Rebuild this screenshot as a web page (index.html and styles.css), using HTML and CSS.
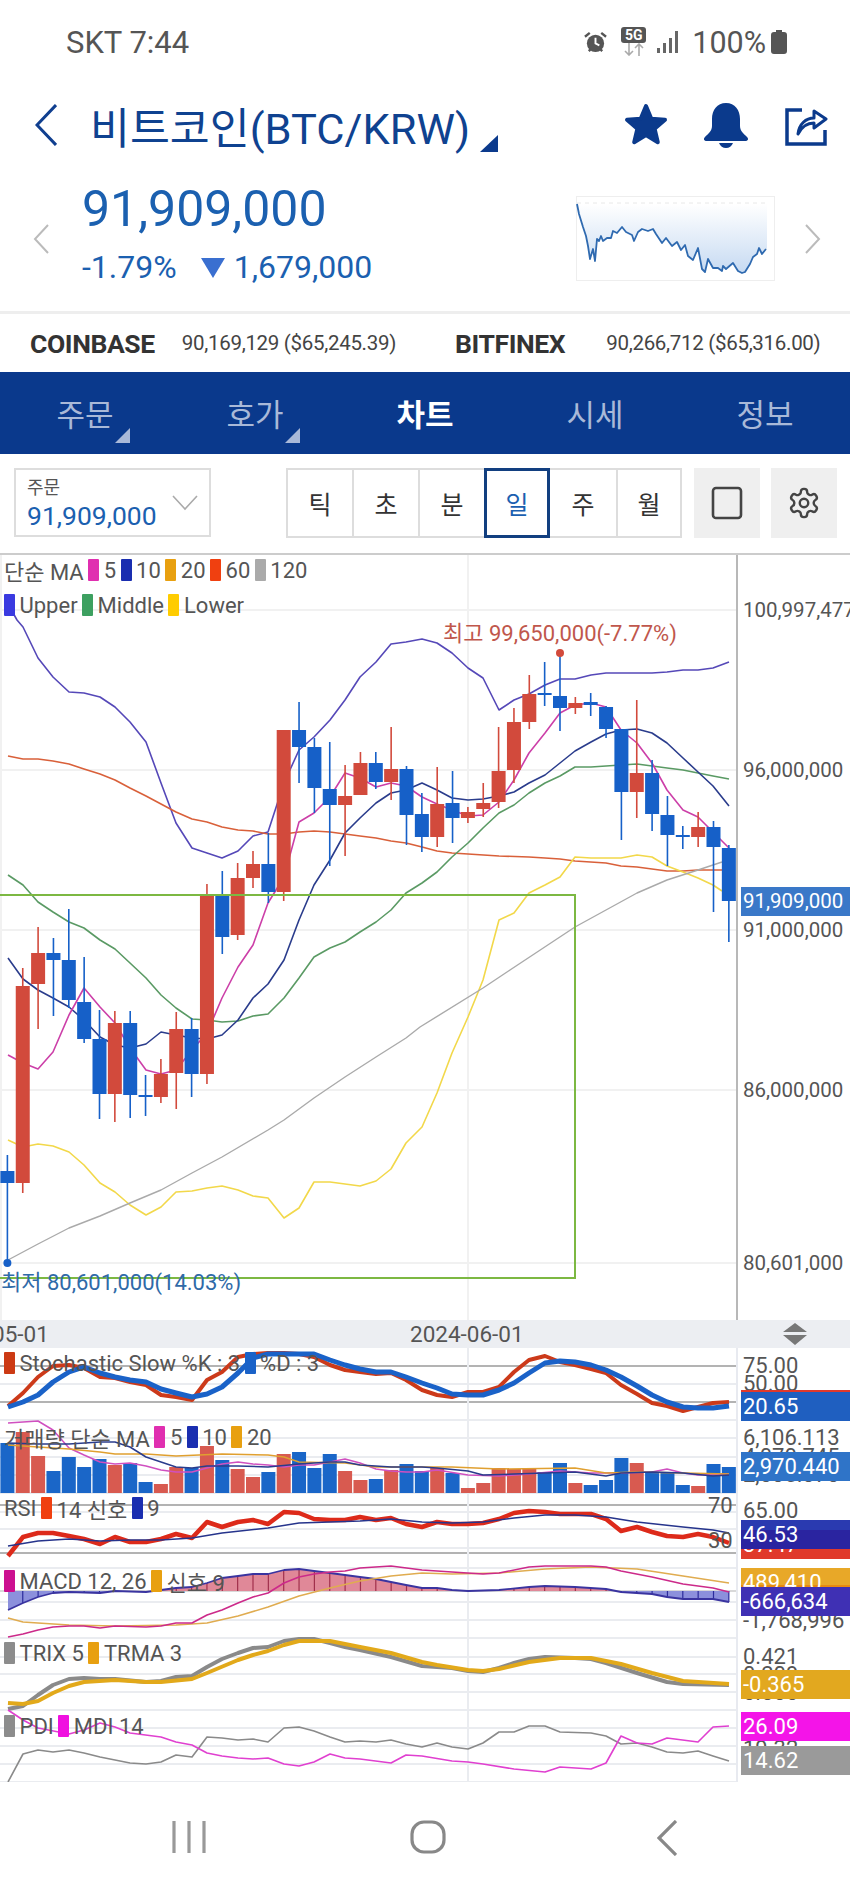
FILE: index.html
```html
<!DOCTYPE html>
<html lang="ko">
<head>
    <meta charset="UTF-8">
    <meta name="viewport" content="width=device-width, initial-scale=1.0">
    <title>비트코인(BTC/KRW) 차트</title>
    <link rel="stylesheet" href="styles.css">
</head>
<body>
    <div id="page">
        <!-- Status bar -->
        <div class="status">
            <span class="status-time">SKT 7:44</span>
            <div class="status-icons">
                <svg class="ico-alarm" width="23" height="23" viewBox="0 0 24 24">
                    <circle cx="12" cy="13" r="9" fill="#555"/>
                    <path d="M1 6l5-4M23 6l-5-4" stroke="#555" stroke-width="2.5" fill="none"/>
                    <path d="M12 7v6l4 2" stroke="#fff" stroke-width="2" fill="none"/>
                    <path d="M5 21l2-2M19 21l-2-2" stroke="#555" stroke-width="2.5"/>
                </svg>
                <div class="ico-5g">
                    <span class="five-g">5G</span>
                    <svg width="22" height="13" viewBox="0 0 22 13">
                        <path d="M6 0v12M2 8l4 4 4-4" stroke="#aaa" stroke-width="1.6" fill="none"/>
                        <path d="M16 13V1M12 5l4-4 4 4" stroke="#aaa" stroke-width="1.6" fill="none"/>
                    </svg>
                </div>
                <svg class="ico-signal" width="22" height="22" viewBox="0 0 22 22">
                    <path d="M1 22v-5h3v5zM7 22V12h3v10zM13 22V7h3v15zM19 22V0h3v22z" fill="#666"/>
                </svg>
                <span class="status-batt">100%</span>
                <svg class="ico-battery" width="16" height="24" viewBox="0 0 16 24">
                    <path d="M5 0h6v2h2a3 3 0 0 1 3 3v16a3 3 0 0 1-3 3H3a3 3 0 0 1-3-3V5a3 3 0 0 1 3-3h2z" fill="#555"/>
                </svg>
            </div>
        </div>

        <!-- Title bar -->
        <div class="title-bar">
            <svg class="back" width="22" height="42" viewBox="0 0 22 42">
                <polyline points="21,1 2,21 21,41" fill="none" stroke="#103f8f" stroke-width="3"/>
            </svg>
            <h1 class="coin-name">비트코인(BTC/KRW)</h1>
            <span class="corner"></span>
            <div class="title-icons">
                <svg width="48" height="48" viewBox="0 0 48 48">
                    <polygon points="24,5 29.3,17.7 43,18.8 32.6,27.8 35.8,41.2 24,34 12.2,41.2 15.4,27.8 5,18.8 18.7,17.7" fill="#0b3a8c" stroke="#0b3a8c" stroke-width="4" stroke-linejoin="round"/>
                </svg>
                <svg class="bell" width="46" height="46" viewBox="0 0 46 46">
                    <path d="M23 1C32 1 37 8 37 17V24C37 29 41 32 44 35C46 37 45 39 42 39H4C1 39 0 37 2 35C5 32 9 29 9 24V17C9 8 14 1 23 1ZM16 41H30C29 44 26 46 23 46C20 46 17 44 16 41Z" fill="#0b3a8c"/>
                </svg>
                <svg class="share" width="44" height="42" viewBox="0 0 44 42">
                    <path d="M18 6H3V40H41V26" fill="none" stroke="#0b3a8c" stroke-width="3.5"/>
                    <path d="M14 30C15 20 22 14 30 14V7L42 15L30 24V19C24 19 18 22 14 30Z" fill="none" stroke="#0b3a8c" stroke-width="3" stroke-linejoin="round"/>
                </svg>
            </div>
        </div>

        <!-- Current price and mini chart -->
        <div class="quote">
            <svg class="arrow-left" width="16" height="30" viewBox="0 0 16 30">
                <polyline points="15,1 2,15 15,29" fill="none" stroke="#bbb" stroke-width="2"/>
            </svg>
            <div class="price-block">
                <div class="price">91,909,000</div>
                <div class="change">
                    <span class="change-pct">-1.79%</span>
                    <span class="tri-down"></span>
                    <span class="change-amt">1,679,000</span>
                </div>
            </div>
            <div class="spark-box">
                <svg width="199" height="85" viewBox="576 197 199 85">
                    <defs>
                        <linearGradient id="sparkFill" x1="0" y1="0" x2="0" y2="1">
                            <stop offset="0" stop-color="#fff"/>
                            <stop offset="1" stop-color="#c6daf2"/>
                        </linearGradient>
                    </defs>
                    <polygon fill="url(#sparkFill)" points="577,205 579,215 583,228 586,237 588,247 590,260 593,250 595,262 597,240 599,242 601,237 603,242 607,239 611,239 613,232 617,234 622,228 626,233 632,236 634,242 638,233 642,230 648,232 653,230 656,235 662,244 666,239 672,247 677,243 681,251 685,246 688,257 693,261 698,249 702,270 705,273 708,260 713,269 718,269 722,272 723,267 726,270 733,264 738,272 742,274 745,273 750,265 753,258 757,255 759,249 762,255 766,250 767,250 767,205"/>
                    <line x1="577" y1="204" x2="767" y2="204" stroke="#e8e8e8" stroke-dasharray="4 4"/>
                    <polyline fill="none" stroke="#2f6ab0" stroke-width="1.8" stroke-linejoin="round" points="577,205 579,215 583,228 586,237 588,247 590,260 593,250 595,262 597,240 599,242 601,237 603,242 607,239 611,239 613,232 617,234 622,228 626,233 632,236 634,242 638,233 642,230 648,232 653,230 656,235 662,244 666,239 672,247 677,243 681,251 685,246 688,257 693,261 698,249 702,270 705,273 708,260 713,269 718,269 722,272 723,267 726,270 733,264 738,272 742,274 745,273 750,265 753,258 757,255 759,249 762,255 766,250"/>
                </svg>
            </div>
            <svg class="arrow-right" width="16" height="30" viewBox="0 0 16 30">
                <polyline points="1,1 14,15 1,29" fill="none" stroke="#bbb" stroke-width="2"/>
            </svg>
        </div>

        <!-- Overseas exchange prices -->
        <div class="exchange">
            <b class="ex-name ex-coinbase">COINBASE</b>
            <span class="ex-price">90,169,129 ($65,245.39)</span>
            <b class="ex-name ex-bitfinex">BITFINEX</b>
            <span class="ex-price">90,266,712 ($65,316.00)</span>
        </div>

        <!-- Main tabs -->
        <div class="nav">
            <div class="nav-item has-menu">주문</div>
            <div class="nav-item has-menu">호가</div>
            <div class="nav-item active">차트</div>
            <div class="nav-item">시세</div>
            <div class="nav-item">정보</div>
        </div>

        <!-- Chart toolbar -->
        <div class="toolbar">
            <div class="selector">
                <div class="selector-text">
                    <span class="selector-label">주문</span>
                    <span class="selector-price">91,909,000</span>
                </div>
                <svg class="selector-arrow" width="26" height="16" viewBox="0 0 26 16">
                    <polyline points="1,1 13,14 25,1" fill="none" stroke="#aaa" stroke-width="1.6"/>
                </svg>
            </div>
            <div class="periods">
                <div class="period">틱</div>
                <div class="period">초</div>
                <div class="period">분</div>
                <div class="period selected">일</div>
                <div class="period">주</div>
                <div class="period">월</div>
            </div>
            <div class="tool-btn first">
                <svg width="32" height="34" viewBox="0 0 32 34">
                    <rect x="2" y="2" width="28" height="30" rx="3" fill="none" stroke="#444" stroke-width="2.6"/>
                </svg>
            </div>
            <div class="tool-btn">
                <svg width="34" height="34" viewBox="0 0 24 24" fill="none" stroke="#444" stroke-width="1.7">
                    <path d="M12.22 2h-.44a2 2 0 0 0-2 2v.18a2 2 0 0 1-1 1.73l-.43.25a2 2 0 0 1-2 0l-.15-.08a2 2 0 0 0-2.73.73l-.22.38a2 2 0 0 0 .73 2.73l.15.1a2 2 0 0 1 1 1.72v.51a2 2 0 0 1-1 1.74l-.15.09a2 2 0 0 0-.73 2.73l.22.38a2 2 0 0 0 2.73.73l.15-.08a2 2 0 0 1 2 0l.43.25a2 2 0 0 1 1 1.73V20a2 2 0 0 0 2 2h.44a2 2 0 0 0 2-2v-.18a2 2 0 0 1 1-1.73l.43-.25a2 2 0 0 1 2 0l.15.08a2 2 0 0 0 2.73-.73l.22-.39a2 2 0 0 0-.73-2.73l-.15-.08a2 2 0 0 1-1-1.74v-.5a2 2 0 0 1 1-1.74l.15-.09a2 2 0 0 0 .73-2.73l-.22-.38a2 2 0 0 0-2.73-.73l-.15.08a2 2 0 0 1-2 0l-.43-.25a2 2 0 0 1-1-1.73V4a2 2 0 0 0-2-2z"/>
                    <circle cx="12" cy="12" r="3"/>
                </svg>
            </div>
        </div>

        <!-- Chart: svg drawn by chart.js, legends and labels on top of it -->
        <div class="chart" id="chart">
            <svg id="plot" width="850" height="1229" viewBox="0 553 850 1229"></svg>

            <div class="panel panel-price">
                <div class="legend">
                    <span>단순 MA</span>
                    <i class="sw c-mag"></i><span>5</span>
                    <i class="sw c-navy"></i><span>10</span>
                    <i class="sw c-orange"></i><span>20</span>
                    <i class="sw c-red"></i><span>60</span>
                    <i class="sw c-grey"></i><span>120</span>
                </div>
                <div class="legend legend-second">
                    <i class="sw c-violet"></i><span>Upper</span>
                    <i class="sw c-green"></i><span>Middle</span>
                    <i class="sw c-yellow"></i><span>Lower</span>
                </div>
                <span class="note note-high">최고 99,650,000(-7.77%)</span>
                <span class="note note-low">최저 80,601,000(14.03%)</span>
            </div>

            <div class="date-strip">
                <span class="date-left">05-01</span>
                <span class="date-mid">2024-06-01</span>
                <svg class="splitter" width="26" height="22" viewBox="0 0 26 22">
                    <path d="M13 0L25 9H1zM1 12H25L13 22z" fill="#777"/>
                </svg>
            </div>

            <div class="panel panel-stoch">
                <div class="legend">
                    <i class="sw c-red-dk"></i><span>Stochastic Slow %K : 3</span>
                    <i class="sw c-blue"></i><span>%D : 3</span>
                </div>
            </div>
            <div class="panel panel-vol">
                <div class="legend">
                    <span>거래량 단순 MA</span>
                    <i class="sw c-mag"></i><span>5</span>
                    <i class="sw c-navy"></i><span>10</span>
                    <i class="sw c-orange"></i><span>20</span>
                </div>
            </div>
            <div class="panel panel-rsi">
                <div class="legend">
                    <span>RSI</span>
                    <i class="sw c-red"></i><span>14 신호</span>
                    <i class="sw c-navy"></i><span>9</span>
                </div>
            </div>
            <div class="panel panel-macd">
                <div class="legend">
                    <i class="sw c-mag-dk"></i><span>MACD 12, 26</span>
                    <i class="sw c-orange"></i><span>신호 9</span>
                </div>
            </div>
            <div class="panel panel-trix">
                <div class="legend">
                    <i class="sw c-grey-dk"></i><span>TRIX 5</span>
                    <i class="sw c-orange"></i><span>TRMA 3</span>
                </div>
            </div>
            <div class="panel panel-dmi">
                <div class="legend">
                    <i class="sw c-grey-dk"></i><span>PDI</span>
                    <i class="sw c-pink"></i><span>MDI 14</span>
                </div>
            </div>

            <!-- Axis values, data-y is the page y of the label centre -->
            <span class="tick tick-main" data-y="610">100,997,477</span>
            <span class="tick tick-main" data-y="770">96,000,000</span>
            <span class="tick tick-main" data-y="930">91,000,000</span>
            <span class="tick tick-main" data-y="1090">86,000,000</span>
            <span class="tick tick-main" data-y="1263">80,601,000</span>
            <span class="tag t-price" data-y="901">91,909,000</span>

            <span class="tick" data-y="1366">75.00</span>
            <span class="tick" data-y="1384">50.00</span>
            <span class="tag t-red" data-y="1404">25.47</span>
            <span class="tag t-blue" data-y="1406">20.65</span>

            <span class="tick" data-y="1438">6,106.113</span>
            <span class="tick" data-y="1457">4,070.745</span>
            <span class="tick" data-y="1475">2,035.373</span>
            <span class="tag t-vol" data-y="1466">2,970.440</span>

            <span class="tick tick-inner" data-y="1506">70</span>
            <span class="tick tick-inner" data-y="1541">30</span>
            <span class="tick" data-y="1511">65.00</span>
            <span class="tag t-red" data-y="1544">37.47</span>
            <span class="tag t-navy" data-y="1534">46.53</span>

            <span class="tag t-orange" data-y="1582">489,410</span>
            <span class="tick" data-y="1621">-1,768,996</span>
            <span class="tag t-purple" data-y="1601">-666,634</span>

            <span class="tick" data-y="1657">0.421</span>
            <span class="tick" data-y="1675">0.209</span>
            <span class="tick" data-y="1693">0.000</span>
            <span class="tag t-gold" data-y="1684">-0.365</span>

            <span class="tick" data-y="1749">19.32</span>
            <span class="tag t-pink" data-y="1726">26.09</span>
            <span class="tag t-grey" data-y="1760">14.62</span>
        </div>

        <!-- Android soft keys -->
        <div class="softkeys">
            <svg class="key-recent" width="34" height="34" viewBox="0 0 34 34">
                <path d="M2 1V33M17 1V33M32 1V33" stroke="#999" stroke-width="3.2" fill="none"/>
            </svg>
            <svg class="key-home" width="36" height="34" viewBox="0 0 36 34">
                <rect x="2" y="2" width="32" height="30" rx="12" fill="none" stroke="#888" stroke-width="3.2"/>
            </svg>
            <svg class="key-back" width="20" height="36" viewBox="0 0 20 36">
                <polyline points="19,1 2,18 19,35" fill="none" stroke="#888" stroke-width="3.2"/>
            </svg>
        </div>
    </div>

    <script src="chart.js"></script>
</body>
</html>
```

FILE: styles.css
```css
* {
    box-sizing: border-box;
}

body {
    margin: 0;
    background-color: #fff;
    font-family: Roboto, "Noto Sans CJK KR", sans-serif;
    color: #555;
}

#page {
    width: 850px;
    height: 1889px;
    display: flex;
    flex-direction: column;
    overflow: hidden;
}

/* Status bar */
.status {
    height: 84px;
    display: flex;
    align-items: center;
    justify-content: space-between;
    padding: 0 63px 0 66px;
    color: #555;
}

.status-time {
    font-size: 31px;
}

.status-icons {
    display: flex;
    align-items: center;
}

.ico-5g {
    display: flex;
    flex-direction: column;
    align-items: center;
    margin: -2px 10px 0 14px;
}

.five-g {
    width: 25px;
    height: 16px;
    background-color: #555;
    border-radius: 3px;
    color: #fff;
    font-size: 14px;
    font-weight: bold;
    line-height: 16px;
    text-align: center;
}

.status-batt {
    margin: 0 5px 0 14px;
    font-size: 30.5px;
}

/* Title bar */
.title-bar {
    height: 82px;
    display: flex;
    align-items: center;
    padding-left: 35px;
}

.coin-name {
    margin: 0 0 0 33px;
    font-size: 43.4px;
    font-weight: normal;
    color: #0f4290;
    white-space: nowrap;
}

.corner {
    width: 0;
    height: 0;
    align-self: flex-end;
    margin: 0 0 14px 10px;
    border-bottom: 17px solid #0b3a8c;
    border-left: 18px solid transparent;
}

.title-icons {
    display: flex;
    align-items: center;
    margin-left: auto;
    margin-right: 22px;
}

.bell {
    margin-left: 33px;
}

.share {
    margin-left: 35px;
}

/* Price + sparkline */
.quote {
    height: 145px;
    display: flex;
    align-items: center;
    padding: 0 29px 0 33px;
}

.price-block {
    margin: 0 0 11px 33px;
    color: #1b60b0;
}

.price {
    height: 60px;
    font-size: 50px;
    line-height: 60px;
}

.change {
    display: flex;
    align-items: center;
    height: 40px;
    margin-top: 8px;
    font-size: 32px;
}

.tri-down {
    width: 0;
    height: 0;
    margin: 2px 9px 0 24px;
    border-top: 20px solid #3a6fd0;
    border-left: 12.5px solid transparent;
    border-right: 12.5px solid transparent;
}

.spark-box {
    width: 199px;
    height: 85px;
    margin-left: auto;
    border: 1px solid #eee;
}

.spark-box svg {
    display: block;
    margin: -1px;
}

.arrow-right {
    margin-left: 30px;
}

/* Exchange prices */
.exchange {
    height: 61px;
    display: flex;
    align-items: center;
    padding-left: 30px;
    border-top: 3px solid #eee;
    font-size: 20.5px;
    color: #444;
    letter-spacing: -0.3px;
}

.ex-name {
    font-size: 26.5px;
    color: #333;
    letter-spacing: -0.4px;
}

.ex-coinbase {
    margin-right: 27px;
}

.ex-bitfinex {
    margin: 0 41px 0 59px;
}

/* Main tabs */
.nav {
    height: 82px;
    display: flex;
    background-color: #0a398c;
}

.nav-item {
    position: relative;
    flex: 1;
    display: flex;
    align-items: center;
    justify-content: center;
    padding-bottom: 2px;
    font-size: 31px;
    color: #a9b9d8;
}

.nav-item.active {
    font-weight: bold;
    color: #fff;
}

.has-menu::after {
    content: "";
    position: absolute;
    right: 40px;
    bottom: 11px;
    border-bottom: 15px solid #a9b9d8;
    border-left: 15px solid transparent;
}

/* Toolbar */
.toolbar {
    height: 99px;
    display: flex;
    align-items: flex-start;
    padding: 14px 0 0 14px;
}

.selector {
    width: 197px;
    height: 69px;
    display: flex;
    justify-content: space-between;
    padding: 5px 11px 0 11px;
    border: 2px solid #ddd;
}

.selector-text {
    display: flex;
    flex-direction: column;
}

.selector-label {
    height: 25px;
    font-size: 18px;
    line-height: 25px;
    color: #555;
}

.selector-price {
    font-size: 26.5px;
    line-height: 32px;
    color: #1b60b0;
}

.selector-arrow {
    margin-top: 20px;
}

.periods {
    display: flex;
    margin-left: 75px;
}

.period {
    width: 66px;
    height: 70px;
    display: flex;
    align-items: center;
    justify-content: center;
    border: 2px solid #ddd;
    border-right-width: 0;
    font-size: 25px;
    color: #333;
}

.period:last-child {
    border-right-width: 2px;
}

.period.selected {
    border: 3px solid #123f80;
    color: #1b60b0;
}

.period.selected + .period {
    border-left-width: 0;
}

.tool-btn {
    width: 66px;
    height: 70px;
    display: flex;
    align-items: center;
    justify-content: center;
    margin-left: 11px;
    background-color: #efefef;
}

.tool-btn.first {
    margin-left: 12px;
}

/* Chart */
.chart {
    position: relative;
    height: 1229px;
}

#plot {
    position: absolute;
    top: 0;
    left: 0;
}

.panel {
    position: relative;
}

.legend {
    display: flex;
    align-items: center;
    gap: 4.5px;
    height: 22px;
    padding-left: 4px;
    font-size: 22px;
    color: #555;
    white-space: nowrap;
}

.sw {
    width: 11px;
    height: 22px;
    border-radius: 1px;
}

.c-mag { background-color: #e02fb0; }
.c-mag-dk { background-color: #cc1090; }
.c-navy { background-color: #1a2eb0; }
.c-orange { background-color: #e8a010; }
.c-red { background-color: #f04010; }
.c-red-dk { background-color: #cc3a14; }
.c-grey { background-color: #aaa; }
.c-grey-dk { background-color: #8c8c8c; }
.c-violet { background-color: #3a3ae0; }
.c-green { background-color: #3da060; }
.c-yellow { background-color: #ffcc00; }
.c-blue { background-color: #1a62c8; }
.c-pink { background-color: #f010e0; }

.panel-price {
    height: 767px;
    padding-top: 4px;
    border-top: 2px solid #ccc;
}

.legend-second {
    margin-top: 13px;
}

.note {
    position: absolute;
    font-size: 22px;
    line-height: 24px;
    white-space: nowrap;
}

.note-high {
    left: 443px;
    top: 67px;
    color: #c0574c;
}

.note-low {
    left: 1px;
    top: 716px;
    color: #2f6aa8;
}

.date-strip {
    position: relative;
    height: 28px;
    background-color: #eceef2;
    font-size: 22.5px;
    line-height: 29px;
    color: #555;
    overflow: hidden;
}

.date-left {
    position: absolute;
    left: -8px;
}

.date-mid {
    position: absolute;
    left: 410px;
}

.splitter {
    position: absolute;
    left: 782px;
    top: 3px;
}

.panel-stoch {
    height: 72px;
    padding-top: 4px;
}

.panel-vol {
    height: 73px;
    padding-top: 6px;
}

.panel-rsi {
    height: 75px;
    padding-top: 4px;
}

.panel-macd {
    height: 72px;
    padding-top: 2px;
}

.panel-trix {
    height: 70px;
    padding-top: 2px;
}

.panel-dmi {
    height: 72px;
    padding-top: 5px;
}

/* Right axis */
.tick,
.tag {
    position: absolute;
    font-size: 22px;
    white-space: nowrap;
}

.tick {
    left: 743px;
    height: 24px;
    line-height: 24px;
    color: #555;
}

.tick-main {
    font-size: 20.5px;
}

.tick-inner {
    left: 708px;
}

.tag {
    left: 741px;
    width: 109px;
    height: 29px;
    padding-left: 2px;
    line-height: 29px;
    color: #fff;
}

.t-price {
    background-color: #3a78c8;
    font-size: 20.5px;
}

.t-red { background-color: #e0392b; }
.t-blue { background-color: #1f5fc0; }
.t-vol { background-color: #2f74c8; }
.t-navy { background: linear-gradient(#2a3ab0 35%, #2a24a0 35%); }
.t-orange { background: linear-gradient(#e8a828 60%, #e88a10 60%); }
.t-purple { background-color: #3f30b4; }
.t-gold { background-color: #e2a81f; }
.t-pink { background-color: #f414e8; }
.t-grey { background-color: #9a9a9a; }

/* Soft keys */
.softkeys {
    height: 107px;
    display: flex;
    align-items: flex-start;
    padding: 38px 0 0 172px;
}

.key-home {
    margin-left: 204px;
}

.key-back {
    margin-left: 211px;
}
```

FILE: chart.js
```js
// Draws the candles and indicator lines into #plot.
// All coordinates are page pixels, the svg viewBox starts at y=553.
var CHART_TOP = 553;
var NS = 'http://www.w3.org/2000/svg';
var plot = document.getElementById('plot');

function add(tag, attrs) {
    var el = document.createElementNS(NS, tag);
    for (var k in attrs) el.setAttribute(k, attrs[k]);
    plot.appendChild(el);
    return el;
}

function line(x1, y1, x2, y2, color, w) {
    add('line', { x1: x1, y1: y1, x2: x2, y2: y2, stroke: color, 'stroke-width': w });
}

function poly(points, color, w) {
    add('polyline', { points: points, fill: 'none', stroke: color, 'stroke-width': w, 'stroke-linejoin': 'round' });
}

function candleX(i) {
    return 7.4 + 15.35 * i;
}

var RED = '#d24a3c';
var BLUE = '#1660c8';

// grid
[610, 770, 930, 1090, 1263].forEach(function (y) { line(0, y, 737, y, '#f1f1f1', 2); });
[1384, 1420, 1438, 1457, 1475, 1493, 1512, 1529, 1548, 1568, 1602, 1620, 1638, 1657, 1674, 1692, 1710, 1728, 1746, 1764, 1782]
    .forEach(function (y) { line(0, y, 737, y, '#eaecf0', 2); });
[1366, 1402, 1505, 1553].forEach(function (y) { line(0, y, 737, y, '#9a9a9a', 1.5); });
line(0, 1591, 737, 1591, '#cccccc', 1.5);
line(468, 553, 468, 1320, '#f1f1f1', 2);
line(468, 1348, 468, 1782, '#eaecf0', 2);
line(1, 553, 1, 1320, '#f1f1f1', 2);
line(737, 553, 737, 1320, '#b8b8b8', 2);
line(737, 1348, 737, 1782, '#e8eaf0', 2);

// moving averages and bollinger bands
poly('8,604 17,620 23,627 38,658 53,677 69,692 84,693 100,697 115,707 130,722 146,742 161,783 176,823 192,848 207,853 222,858 238,851 253,836 268,832 284,783 299,750 314,737 330,720 345,700 360,677 376,662 391,644 406,642 422,639 437,643 452,653 468,668 483,678 499,710 514,700 529,694 545,685 560,679 575,679 591,675 606,673 637,673 652,673 667,672 683,670 698,670 713,668 729,662', '#5548b8', 1.6);
poly('8,756 23,759 38,759 53,761 69,764 84,769 100,774 115,780 130,788 146,796 161,804 176,812 192,819 207,822 222,827 238,830 253,831 268,834 284,834 299,832 314,831 330,832 345,834 360,836 376,838 391,841 406,843 422,847 437,851 452,853 468,854 499,856 529,857 545,858 560,859 575,861 606,863 621,866 637,867 652,869 667,871 683,871 698,870 713,870 722,870', '#d9603a', 1.6);
poly('8,875 23,885 38,902 53,912 69,922 84,928 100,940 115,949 130,963 146,978 161,995 176,1008 192,1019 207,1020 222,1022 238,1021 253,1016 268,1014 284,998 299,978 314,957 330,948 345,942 360,932 376,922 391,910 406,893 422,883 437,872 452,857 468,843 483,828 499,813 514,805 529,793 545,783 560,776 575,767 591,767 621,765 637,764 652,766 667,768 683,770 698,773 713,776 729,779', '#5a9a64', 1.6);
poly('8,958 23,979 38,990 53,998 69,1007 84,1020 100,1037 115,1045 130,1048 146,1044 161,1032 176,1035 192,1038 207,1039 222,1035 238,1020 253,998 268,984 284,960 299,920 314,885 330,860 345,833 360,818 376,803 391,793 406,790 422,783 437,790 452,798 468,800 483,799 499,796 514,792 529,783 545,775 560,763 575,751 591,742 606,734 621,730 637,729 652,733 667,743 683,758 698,772 713,786 729,806', '#2a3c8c', 1.6);
poly('8,1055 23,1063 38,1069 53,1052 69,1015 84,988 100,1007 115,1023 130,1048 146,1070 161,1074 176,1070 192,1050 207,1033 222,998 238,967 253,945 268,903 284,877 299,822 314,813 330,797 345,773 360,778 376,787 391,783 406,786 422,797 437,804 452,810 468,816 483,815 499,802 514,780 529,753 545,733 560,713 575,705 591,703 606,707 621,730 637,743 652,763 667,790 683,810 698,817 713,832 729,848', '#cc3fa8', 1.6);
poly('8,1140 23,1147 38,1144 53,1146 69,1152 84,1165 100,1183 115,1192 130,1205 146,1215 161,1207 176,1192 192,1191 207,1188 222,1186 238,1190 253,1196 268,1198 284,1218 299,1208 314,1182 330,1182 345,1184 360,1186 376,1181 391,1169 406,1143 422,1127 437,1093 452,1053 468,1017 483,980 499,920 514,913 529,893 545,885 560,877 575,857 591,858 621,858 637,855 652,857 667,866 683,872 698,878 713,885 722,891', '#f2d84a', 1.6);
poly('8,1260 38,1244 69,1228 100,1216 130,1203 161,1190 192,1173 222,1157 268,1130 284,1120 314,1098 345,1077 376,1057 406,1038 420,1027 483,988 510,970 575,927 606,910 637,893 667,880 698,870 722,862', '#aaaaaa', 1.4);

// candles: colour, wick top, body top, body bottom, wick bottom
var candles = [
    ['b', 1155, 1171, 1183, 1263], ['r', 968, 986, 1183, 1193], ['r', 927, 953, 984, 1029], ['b', 938, 953, 960, 1016],
    ['b', 909, 960, 1000, 1008], ['b', 957, 1002, 1039, 1043], ['b', 1010, 1039, 1094, 1119], ['r', 1011, 1023, 1094, 1122],
    ['b', 1011, 1023, 1095, 1118], ['b', 1075, 1095, 1097, 1116], ['r', 1059, 1074, 1097, 1103], ['r', 1012, 1029, 1073, 1109],
    ['b', 1018, 1029, 1074, 1097], ['r', 884, 895, 1074, 1084], ['b', 871, 895, 937, 954], ['r', 863, 878, 935, 940],
    ['r', 851, 864, 878, 888], ['b', 833, 864, 892, 903], ['r', 730, 730, 892, 901], ['b', 702, 730, 747, 783],
    ['b', 738, 747, 788, 813], ['b', 742, 789, 805, 866], ['r', 765, 796, 805, 856], ['r', 752, 763, 795, 795],
    ['b', 752, 763, 782, 789], ['r', 727, 769, 782, 800], ['b', 766, 769, 815, 845], ['b', 793, 814, 837, 852],
    ['r', 767, 804, 837, 847], ['b', 771, 803, 818, 843], ['r', 807, 812, 818, 823], ['r', 783, 803, 809, 817],
    ['r', 727, 771, 802, 808], ['r', 708, 722, 770, 783], ['r', 675, 694, 722, 729], ['b', 662, 693, 695, 706],
    ['b', 653, 696, 708, 731], ['r', 697, 703, 708, 714], ['b', 693, 702, 705, 716], ['b', 706, 707, 729, 738],
    ['b', 729, 729, 792, 840], ['r', 700, 773, 792, 818], ['b', 760, 773, 814, 831], ['b', 796, 815, 835, 866],
    ['b', 826, 835, 837, 849], ['r', 812, 827, 837, 847], ['b', 821, 827, 847, 912], ['b', 845, 848, 901, 942]
];

candles.forEach(function (c, i) {
    var x = candleX(i);
    var color = c[0] === 'r' ? RED : BLUE;
    line(x, c[1], x, c[4], color, 1.6);
    add('rect', { x: x - 7, y: c[2], width: 14, height: c[3] - c[2], fill: color });
});

// high and low markers, green box
add('circle', { cx: 560, cy: 653, r: 4, fill: RED });
add('circle', { cx: 7.4, cy: 1263, r: 4, fill: BLUE });
add('path', { d: 'M-2 895H575V1278H-2', fill: 'none', stroke: '#7cb842', 'stroke-width': 2 });

// stochastic
poly('8,1406 23,1393 38,1377 53,1366 69,1365 84,1368 100,1377 115,1378 130,1382 146,1385 161,1395 176,1397 192,1400 207,1380 222,1372 238,1357 253,1354 268,1353 284,1353 299,1354 314,1357 330,1365 345,1370 360,1372 376,1374 391,1373 406,1380 422,1390 437,1395 452,1397 468,1392 483,1392 499,1387 514,1372 529,1360 545,1356 560,1362 575,1365 591,1369 606,1373 621,1385 637,1394 652,1403 667,1406 683,1411 698,1407 713,1403 729,1402', '#cc3a1a', 4);
poly('8,1407 23,1402 38,1395 53,1382 69,1372 84,1367 100,1373 115,1377 130,1380 146,1382 161,1389 176,1393 192,1397 207,1394 222,1387 238,1373 253,1358 268,1354 284,1354 299,1354 314,1354 330,1360 345,1365 360,1369 376,1372 391,1372 406,1377 422,1383 437,1388 452,1394 468,1395 483,1395 499,1390 514,1383 529,1373 545,1363 560,1361 575,1362 591,1365 606,1370 621,1377 637,1386 652,1395 667,1402 683,1407 698,1408 713,1408 729,1406', '#1a62c8', 5);

// volume bars: colour, top
var volumes = [
    ['b', 1443], ['r', 1432], ['r', 1456], ['b', 1471], ['b', 1457], ['b', 1467], ['b', 1459], ['r', 1465],
    ['b', 1463], ['b', 1482], ['r', 1484], ['r', 1467], ['b', 1468], ['r', 1446], ['b', 1460], ['r', 1469],
    ['r', 1477], ['b', 1472], ['r', 1454], ['b', 1452], ['b', 1468], ['b', 1454], ['r', 1471], ['r', 1480],
    ['b', 1479], ['r', 1470], ['b', 1464], ['b', 1471], ['r', 1468], ['b', 1473], ['r', 1488], ['r', 1483],
    ['r', 1468], ['r', 1469], ['r', 1469], ['b', 1472], ['b', 1463], ['r', 1483], ['b', 1485], ['b', 1480],
    ['b', 1458], ['r', 1463], ['b', 1473], ['b', 1473], ['b', 1485], ['r', 1486], ['b', 1464], ['b', 1467]
];

volumes.forEach(function (v, i) {
    add('rect', { x: candleX(i) - 7, y: v[1], width: 14, height: 1493 - v[1], fill: v[0] === 'r' ? '#d85a50' : '#1a66c8' });
});

poly('8,1423 38,1421 53,1430 69,1448 84,1455 100,1462 115,1464 130,1463 146,1466 161,1470 176,1472 192,1472 207,1468 222,1464 238,1462 253,1464 268,1465 284,1467 299,1465 314,1465 330,1462 345,1459 360,1463 376,1469 391,1471 406,1472 422,1472 437,1470 468,1475 499,1476 529,1474 560,1471 591,1473 621,1473 652,1472 667,1469 683,1473 698,1475 729,1474', '#d050c0', 1.5);
poly('8,1445 38,1447 69,1449 100,1452 115,1454 146,1454 176,1456 222,1454 268,1455 284,1457 299,1462 345,1463 376,1467 422,1467 452,1467 499,1469 575,1468 606,1473 637,1472 683,1473 729,1474', '#e0a030', 1.5);
poly('8,1443 38,1444 69,1444 100,1442 115,1442 130,1447 146,1457 161,1462 176,1467 192,1468 207,1466 238,1466 268,1467 299,1464 330,1462 345,1462 360,1465 391,1467 422,1467 437,1468 468,1471 483,1475 514,1474 545,1473 575,1472 606,1476 621,1473 652,1472 683,1473 713,1476 729,1475', '#2a3c8c', 1.5);

// rsi
poly('8,1556 23,1537 38,1533 53,1533 69,1536 84,1539 100,1544 115,1537 130,1542 146,1542 161,1539 176,1534 192,1538 207,1522 222,1527 238,1522 253,1520 268,1524 284,1512 299,1513 314,1519 330,1520 345,1520 360,1517 376,1520 391,1518 406,1524 422,1527 437,1522 452,1524 468,1524 483,1523 499,1519 514,1513 529,1511 545,1512 560,1514 575,1514 591,1514 606,1519 621,1531 637,1527 652,1532 667,1536 683,1537 698,1534 713,1537 729,1543', '#dd2a1a', 4.5);
poly('8,1546 38,1541 69,1539 100,1541 130,1540 161,1540 192,1538 222,1533 268,1528 299,1523 330,1522 360,1521 391,1519 422,1522 452,1523 483,1522 514,1518 545,1515 575,1515 606,1517 637,1522 683,1527 713,1530 729,1533', '#26348c', 1.5);

// macd: area above and below the zero line, bars down to the line
var macd = '8,1610 23,1603 38,1597 53,1593 69,1592 100,1593 115,1591 146,1592 161,1590 176,1588 192,1587 207,1583 222,1578 238,1576 253,1574 268,1574 284,1570 299,1569 314,1571 330,1573 345,1575 360,1577 376,1579 391,1582 406,1585 422,1588 437,1588 452,1590 468,1591 499,1590 529,1587 545,1586 575,1587 606,1589 621,1592 652,1594 667,1597 683,1599 713,1599 729,1602';
var macdPoints = macd.split(' ').map(function (p) { return p.split(',').map(Number); });

function macdAt(x) {
    for (var i = 1; i < macdPoints.length; i++) {
        var a = macdPoints[i - 1], b = macdPoints[i];
        if (x <= b[0]) return a[1] + (b[1] - a[1]) * (x - a[0]) / (b[0] - a[0]);
    }
    return macdPoints[macdPoints.length - 1][1];
}

var defs = add('defs', {});
[['macdUp', 553, 1038], ['macdDown', 1591, 60]].forEach(function (c) {
    var clip = document.createElementNS(NS, 'clipPath');
    clip.setAttribute('id', c[0]);
    var r = document.createElementNS(NS, 'rect');
    r.setAttribute('x', 0);
    r.setAttribute('y', c[1]);
    r.setAttribute('width', 737);
    r.setAttribute('height', c[2]);
    clip.appendChild(r);
    defs.appendChild(clip);
});

var area = '8,1591 ' + macd + ' 729,1591';
add('polygon', { points: area, fill: '#e08898', 'clip-path': 'url(#macdUp)' });
add('polygon', { points: area, fill: '#8c90dc', 'clip-path': 'url(#macdDown)' });

for (var i = 1; i < 48; i++) {
    var bx = candleX(i);
    var by = macdAt(bx);
    line(bx, 1591, bx, by, by < 1591 ? '#a0304c' : '#2c2c9c', 1.2);
}

poly(macd, '#3a34a0', 1.8);
poly('8,1618 23,1622 38,1623 69,1625 115,1626 176,1625 207,1623 238,1616 268,1607 299,1596 330,1588 360,1581 391,1576 422,1573 452,1574 499,1573 545,1569 591,1567 637,1569 683,1576 729,1583', '#e0ac50', 1.5);
poly('8,1637 23,1634 38,1630 53,1627 69,1626 84,1626 100,1628 115,1626 146,1627 161,1626 176,1623 192,1623 207,1615 222,1610 238,1603 253,1597 268,1593 284,1583 299,1577 314,1574 330,1572 345,1571 360,1568 391,1566 422,1570 452,1572 483,1574 499,1573 529,1567 545,1566 591,1566 606,1567 621,1571 652,1577 683,1584 713,1588 729,1592', '#cc2a8a', 1.6);

// trix
poly('8,1709 23,1706 38,1695 53,1685 69,1679 84,1678 100,1679 115,1679 146,1682 161,1681 176,1677 192,1676 207,1667 222,1659 238,1653 253,1648 268,1647 284,1641 299,1639 314,1639 330,1643 345,1647 360,1650 391,1657 422,1666 452,1668 468,1671 483,1672 499,1668 514,1663 529,1659 545,1657 575,1658 591,1659 606,1663 637,1673 667,1682 683,1684 729,1685', '#8a8a8a', 4);
poly('8,1703 23,1704 38,1701 53,1693 69,1686 84,1682 115,1680 146,1682 161,1682 192,1679 207,1673 238,1660 253,1655 268,1651 284,1645 299,1641 330,1641 360,1647 391,1653 422,1662 437,1665 468,1670 483,1671 499,1669 529,1662 560,1658 591,1658 621,1664 652,1673 683,1681 729,1684', '#e2a91a', 4);

// dmi
poly('8,1782 23,1754 38,1750 53,1752 69,1750 84,1753 100,1757 115,1760 130,1763 146,1764 161,1762 176,1755 192,1757 207,1737 222,1738 238,1740 253,1739 268,1742 284,1728 299,1727 314,1731 330,1737 345,1742 360,1741 376,1742 391,1740 406,1744 422,1747 437,1743 452,1747 468,1749 483,1743 499,1732 514,1732 529,1726 545,1726 560,1732 591,1733 606,1736 621,1744 637,1743 652,1747 667,1752 683,1753 698,1751 713,1756 729,1761', '#8a8a8a', 1.6);
poly('8,1710 23,1720 38,1728 69,1734 84,1730 100,1723 115,1727 130,1733 161,1737 176,1742 192,1745 207,1753 222,1756 238,1758 253,1759 268,1758 284,1764 299,1766 314,1762 330,1754 345,1758 360,1759 391,1763 406,1755 422,1756 452,1761 468,1762 483,1764 514,1769 545,1772 560,1767 591,1769 606,1763 621,1736 637,1743 652,1744 667,1738 698,1742 713,1727 729,1726', '#e040d0', 1.6);

// place the axis labels from their data-y value
document.querySelectorAll('#chart [data-y]').forEach(function (el) {
    var half = el.classList.contains('tag') ? 14.5 : 12;
    el.style.top = (Number(el.dataset.y) - CHART_TOP - half) + 'px';
});
```
